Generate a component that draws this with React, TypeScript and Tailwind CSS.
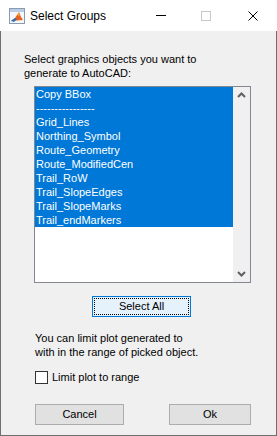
import React from "react";

const ITEMS = [
  "Copy BBox",
  "----------------",
  "Grid_Lines",
  "Northing_Symbol",
  "Route_Geometry",
  "Route_ModifiedCen",
  "Trail_RoW",
  "Trail_SlopeEdges",
  "Trail_SlopeMarks",
  "Trail_endMarkers",
];

function MatlabIcon() {
  return (
    <svg width="16" height="16" viewBox="0 0 16 16">
      <rect x="0.5" y="0.5" width="15" height="15" fill="#f4f7fb" stroke="#8a9bb0" />
      <rect x="1" y="1" width="14" height="3" fill="#b9cde6" />
      <path d="M2 13 L6 10 L8 7 L10 4 L12 9 L14 12 Z" fill="#e8641c" />
      <path d="M2 13 L6 10 L8 11 L5 14 Z" fill="#2e6fb8" />
      <path d="M8 7 L10 4 L10.5 8 Z" fill="#f5b041" />
    </svg>
  );
}

export default function App() {
  return (
    <div className="w-[277px] h-[436px] flex flex-col bg-white font-['Liberation_Sans',Arial,sans-serif] text-[11px] text-black">
      {/* title bar */}
      <div className="h-[31px] flex items-center shrink-0">
        <div className="ml-[9px]">
          <MatlabIcon />
        </div>
        <span className="ml-[5px] text-[12px]">Select Groups</span>
        <div className="ml-auto flex items-center">
          <div className="w-[10px] h-px bg-black mr-[35px]" />
          <div className="w-[10px] h-[10px] border border-[#c8c8c8] mr-[37px]" />
          <svg width="10" height="10" viewBox="0 0 10 10" className="mr-[19px]">
            <path d="M0.5 0.5 L9.5 9.5 M9.5 0.5 L0.5 9.5" stroke="#000" strokeWidth="1" />
          </svg>
        </div>
      </div>

      {/* body */}
      <div className="flex-1 bg-[#f0f0f0] border-x border-b border-[#6f6f6f] flex flex-col">
        <div className="mt-[21px] ml-[23px] leading-[14px]">
          <div>Select graphics objects you want to</div>
          <div>generate to AutoCAD:</div>
        </div>

        <div className="mt-[6px] ml-[33px] w-[217px] h-[197px] border border-[#828790] bg-white flex">
          <div className="flex-1 flex flex-col">
            {ITEMS.map((it) => (
              <div
                key={it}
                className="h-[14px] leading-[14px] bg-[#0078d7] text-white pl-[1px] whitespace-nowrap"
              >
                {it}
              </div>
            ))}
          </div>
          <div className="w-[17px] bg-[#f0f0f0] flex flex-col justify-between items-center py-[5px]">
            <svg width="9" height="6" viewBox="0 0 9 6">
              <path d="M1 5 L4.5 1.5 L8 5" stroke="#606060" strokeWidth="2" fill="none" />
            </svg>
            <svg width="9" height="6" viewBox="0 0 9 6">
              <path d="M1 1 L4.5 4.5 L8 1" stroke="#606060" strokeWidth="2" fill="none" />
            </svg>
          </div>
        </div>

        <div className="mt-[13px] ml-[91px] w-[99px] h-[21px] border border-[#0078d7] bg-[#e5f1fb] p-[1px]">
          <div className="w-full h-full border border-dotted border-black flex items-center justify-center">
            Select All
          </div>
        </div>

        <div className="mt-[14px] ml-[34px] leading-[14px]">
          <div>You can limit plot generated to</div>
          <div>with in the range of picked object.</div>
        </div>

        <div className="mt-[10px] ml-[34px] flex items-center">
          <div className="w-[13px] h-[13px] border border-[#333] bg-white" />
          <span className="ml-[4px]">Limit plot to range</span>
        </div>

        <div className="mt-[18px] ml-[34px] flex">
          <div className="w-[89px] h-[21px] border border-[#adadad] bg-[#e1e1e1] flex items-center justify-center">
            Cancel
          </div>
          <div className="ml-[45px] w-[82px] h-[21px] border border-[#adadad] bg-[#e1e1e1] flex items-center justify-center">
            Ok
          </div>
        </div>
      </div>
    </div>
  );
}
